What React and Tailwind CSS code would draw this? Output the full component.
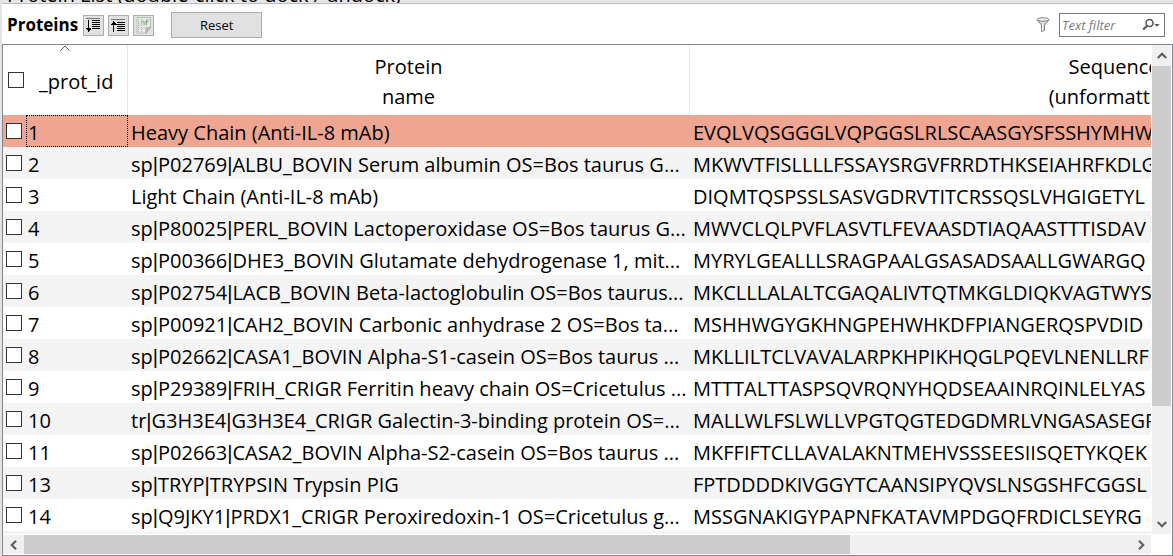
import React from "react";

const rows = [
  ["1", "Heavy Chain (Anti-IL-8 mAb)", "EVQLVQSGGGLVQPGGSLRLSCAASGYSFSSHYMHW"],
  ["2", "sp|P02769|ALBU_BOVIN Serum albumin OS=Bos taurus G...", "MKWVTFISLLLLFSSAYSRGVFRRDTHKSEIAHRFKDLG"],
  ["3", "Light Chain (Anti-IL-8 mAb)", "DIQMTQSPSSLSASVGDRVTITCRSSQSLVHGIGETYL"],
  ["4", "sp|P80025|PERL_BOVIN Lactoperoxidase OS=Bos taurus G...", "MWVCLQLPVFLASVTLFEVAASDTIAQAASTTTISDAV"],
  ["5", "sp|P00366|DHE3_BOVIN Glutamate dehydrogenase 1, mit...", "MYRYLGEALLLSRAGPAALGSASADSAALLGWARGQ"],
  ["6", "sp|P02754|LACB_BOVIN Beta-lactoglobulin OS=Bos taurus...", "MKCLLLALALTCGAQALIVTQTMKGLDIQKVAGTWYS"],
  ["7", "sp|P00921|CAH2_BOVIN Carbonic anhydrase 2 OS=Bos ta...", "MSHHWGYGKHNGPEHWHKDFPIANGERQSPVDID"],
  ["8", "sp|P02662|CASA1_BOVIN Alpha-S1-casein OS=Bos taurus ...", "MKLLILTCLVAVALARPKHPIKHQGLPQEVLNENLLRF"],
  ["9", "sp|P29389|FRIH_CRIGR Ferritin heavy chain OS=Cricetulus ...", "MTTTALTTASPSQVRQNYHQDSEAAINRQINLELYAS"],
  ["10", "tr|G3H3E4|G3H3E4_CRIGR Galectin-3-binding protein OS=...", "MALLWLFSLWLLVPGTQGTEDGDMRLVNGASASEGR"],
  ["11", "sp|P02663|CASA2_BOVIN Alpha-S2-casein OS=Bos taurus ...", "MKFFIFTCLLAVALAKNTMEHVSSSEESIISQETYKQEK"],
  ["13", "sp|TRYP|TRYPSIN Trypsin PIG", "FPTDDDDKIVGGYTCAANSIPYQVSLNSGSHFCGGSL"],
  ["14", "sp|Q9JKY1|PRDX1_CRIGR Peroxiredoxin-1 OS=Cricetulus g...", "MSSGNAKIGYPAPNFKATAVMPDGQFRDICLSEYRG"],
];

function Check({ label }) {
  return (
    <input
      type="checkbox"
      aria-label={label}
      className="block size-4 shrink-0 appearance-none border border-[#333333] bg-white checked:bg-[#333333]"
    />
  );
}

function ProteinName({ name }) {
  return name.split("|").map((part, i) => (
    <React.Fragment key={i}>
      {i > 0 && <span className="font-['Liberation_Sans',sans-serif]">|</span>}
      {part}
    </React.Fragment>
  ));
}

function Chevron({ d }) {
  return (
    <svg viewBox="0 0 10 10" className="size-[10px]" fill="none" stroke="#606060" strokeWidth="2.2">
      <path d={d} />
    </svg>
  );
}

function ToolButton({ label, children }) {
  return (
    <button
      type="button"
      aria-label={label}
      className="flex size-[21px] items-center justify-center border border-[#adadad] bg-[#e1e1e1]"
    >
      {children}
    </button>
  );
}

function SortIcon({ up }) {
  return (
    <svg viewBox="0 0 17 17" className="size-[17px]" fill="none" stroke="#000" shapeRendering="crispEdges">
      {up ? (
        <>
          <path d="M1 2.500h14" stroke="#777" />
          <path d="M3.500 4v11M1.500 6.500h4M.5 7.500h6M2.500 5.500h2M7 5.500h8M7 7.500h8M7 9.500h8M7 11.500h8M7 13.500h8" />
        </>
      ) : (
        <>
          <path d="M1 1.500h14" stroke="#777" />
          <path d="M3.500 3v12M1 11.500h5M1.500 12.500h4M2.500 13.500h2M7 3.500h8M7 5.500h8M7 7.500h8M7 9.500h8M7 11.500h8" />
        </>
      )}
    </svg>
  );
}

function ExportIcon() {
  return (
    <svg viewBox="0 0 17 17" className="size-[17px]" fill="none">
      <path d="M2 .5h13.5v10l-4.500 5.500H2z" fill="#e9ebe9" stroke="#bcc0bc" />
      <path d="M3.500 2v13M3.500 5h7M3.500 8h7M3.500 11h7M6.500 2v13" stroke="#b4b8b4" strokeDasharray="1 1" />
      <path d="M6 3h3v3H6zM11 2h3v3h-3zM8 6h3v2H8z" fill="#acd8ac" />
      <path d="M8 5h5M11.500 3v5" stroke="#8fae8f" />
      <path d="M15.500 10.500L11 11v5z" fill="#c6c6c6" stroke="#a8a8a8" />
    </svg>
  );
}

export default function App() {
  return (
    <div className="flex h-screen flex-col overflow-hidden border-l-2 border-[#e3e3e3] bg-white font-['Open_Sans','Noto_Sans',sans-serif] text-black">
      <header className="flex h-1 shrink-0 items-end overflow-hidden border-b border-[#bdbdbd] bg-[#e6e6e6] pl-[5px]">
        <h1 className="text-[20px] leading-4 whitespace-nowrap">Protein List (double-click to dock / undock)</h1>
      </header>

      <div className="flex h-10 shrink-0 items-center pr-2 pb-0.5 pl-[5px] pt-1">
        <h2 className="text-[17px] leading-6 font-bold">Proteins</h2>
        <div className="ml-[5px] flex gap-1">
          <ToolButton label="Sort descending"><SortIcon /></ToolButton>
          <ToolButton label="Sort ascending"><SortIcon up /></ToolButton>
          <ToolButton label="Export table"><ExportIcon /></ToolButton>
        </div>
        <button
          type="button"
          className="ml-[17px] h-[26px] w-[91px] border border-[#adadad] bg-[#e1e1e1] text-[13px] leading-5"
        >
          Reset
        </button>
        <svg viewBox="0 0 14 16" className="mr-[9px] ml-auto h-4 w-[14px]" fill="none">
          <path d="M1 3l4.500 5v6.500l3-1V8L13 3z" fill="#d8d8d8" stroke="#808080" />
          <path d="M6.500 7v7" stroke="#fff" />
          <ellipse cx="7" cy="2.500" rx="6" ry="1.700" fill="#f2f2f2" stroke="#808080" />
        </svg>
        <div className="flex h-6 w-[106px] items-center border border-[#7a7a7a] bg-white pl-0.5">
          <input
            type="text"
            aria-label="Text filter"
            placeholder="Text filter"
            className="min-w-0 flex-1 bg-transparent text-[13px] leading-5 italic outline-none placeholder:text-[#7b7b7b]"
          />
          <button type="button" aria-label="Filter options" className="mr-1">
            <svg viewBox="0 0 18 14" className="h-[14px] w-[18px]" fill="none">
              <circle cx="7.500" cy="5" r="3.500" stroke="#505050" strokeWidth="1.500" />
              <path d="M5 8l-3.800 3.500" stroke="#505050" strokeWidth="2" />
              <path d="M12.500 6h5L15 8.800z" fill="#505050" />
            </svg>
          </button>
        </div>
      </div>

      <main className="flex min-h-0 flex-1 flex-col border border-[#828790] pr-px pb-px">
        <div className="flex min-h-0 flex-1">
          <div className="min-w-0 flex-1 overflow-hidden">
            <table className="w-[1535px] table-fixed border-separate border-spacing-0 text-[20px] leading-7">
              <colgroup>
                <col className="w-[125px]" />
                <col className="w-[562px]" />
                <col />
              </colgroup>
              <thead className="leading-[30px]">
                <tr className="h-[70px]">
                  <th className="border-r border-[#e5e5e5] p-0 align-top font-normal">
                    <svg viewBox="0 0 10 6" className="mx-auto h-[6px] w-[10px]" fill="none" stroke="#5c5c5c">
                      <path d="M.5 5.500L5 1l4.500 4.500" />
                    </svg>
                    <div className="flex items-center gap-[15px] pt-3 pl-[5px]">
                      <Check label="Select all proteins" />
                      <span className="pt-1">_prot_id</span>
                    </div>
                  </th>
                  <th className="border-r border-[#e5e5e5] p-0 pt-1 align-middle font-normal">
                    Protein
                    <br />
                    name
                  </th>
                  <th className="p-0 pt-1 align-middle font-normal">
                    Sequence
                    <br />
                    (unformatted)
                  </th>
                </tr>
              </thead>
              <tbody>
                {rows.map(([id, name, seq], i) => (
                  <tr key={id} className={i === 0 ? "h-8 bg-[#eea592]" : i % 2 ? "h-8 bg-[#f4f4f4]" : "h-8 bg-white"}>
                    <td className="p-0">
                      <div className="flex h-8 items-center pl-[3px]">
                        <Check label={"Select protein " + id} />
                        <span
                          className={
                            i === 0
                              ? "ml-1 h-8 flex-1 border border-dotted border-black pt-[3px] pl-px"
                              : "ml-1.5 pt-1"
                          }
                        >
                          {id}
                        </span>
                      </div>
                    </td>
                    <td className="overflow-hidden p-0 pt-1 pl-[3px] whitespace-nowrap">
                      <ProteinName name={name} />
                    </td>
                    <td className="overflow-hidden p-0 pt-1 pl-[3px] whitespace-nowrap">{seq}</td>
                  </tr>
                ))}
                <tr className="h-8 bg-[#f4f4f4]">
                  <td colSpan={3} />
                </tr>
              </tbody>
            </table>
          </div>
          <div className="flex w-5 shrink-0 flex-col border-l border-white bg-[#f0f0f0]">
            <button type="button" aria-label="Scroll up" className="flex h-[21px] shrink-0 items-center justify-center">
              <Chevron d="M.8 7L5 2.800 9.200 7" />
            </button>
            <div className="flex min-h-0 flex-1 flex-col">
              <div className="h-[76%] bg-[#cdcdcd]" />
            </div>
            <button type="button" aria-label="Scroll down" className="flex h-[21px] shrink-0 items-center justify-center">
              <Chevron d="M.8 3L5 7.200 9.200 3" />
            </button>
          </div>
        </div>
        <div className="mr-5 flex h-5 shrink-0 border-t border-white bg-[#f0f0f0]">
          <button type="button" aria-label="Scroll left" className="flex w-[21px] shrink-0 items-center justify-center">
            <Chevron d="M7 .8L2.800 5 7 9.200" />
          </button>
          <div className="flex min-w-0 flex-1">
            <div className="grow-[827] bg-[#cdcdcd]" />
            <div className="grow-[280]" />
          </div>
          <button type="button" aria-label="Scroll right" className="flex w-[21px] shrink-0 items-center justify-center">
            <Chevron d="M3 .8L7.200 5 3 9.200" />
          </button>
        </div>
      </main>
    </div>
  );
}
